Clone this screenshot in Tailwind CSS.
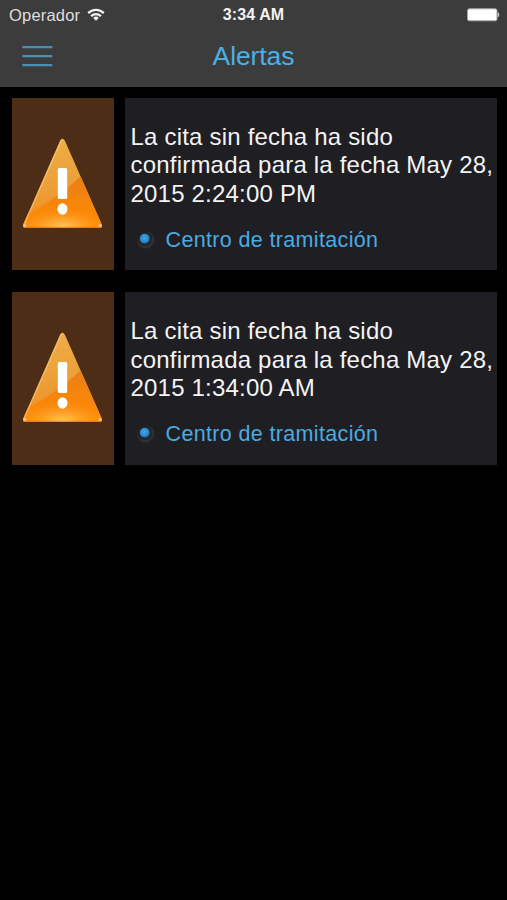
<!DOCTYPE html>
<html lang="es">
<head>
<meta charset="utf-8">
<title>Alertas</title>
<script src="https://cdn.jsdelivr.net/npm/@tailwindcss/browser@4"></script>
</head>
<body class="bg-black">
<svg class="absolute h-0 w-0" aria-hidden="true">
  <defs>
    <linearGradient id="tri" x1="0.3" y1="0" x2="0.5" y2="1"><stop offset="0" stop-color="#efae46"/><stop offset=".5" stop-color="#eda03a"/><stop offset="1" stop-color="#f08a1c"/></linearGradient>
    <linearGradient id="low" x1="0" y1="0" x2="0" y2="1"><stop offset="0" stop-color="#e88018"/><stop offset=".6" stop-color="#f98608"/><stop offset="1" stop-color="#ff9210"/></linearGradient>
    <radialGradient id="glow" cx=".5" cy="1" r=".5"><stop offset="0" stop-color="#ffd070"/><stop offset="1" stop-color="#ff9a20" stop-opacity="0"/></radialGradient>
    <radialGradient id="dot" cx=".45" cy=".4" r=".6"><stop offset="0" stop-color="#46a5e2"/><stop offset=".7" stop-color="#2a88ca"/><stop offset="1" stop-color="#1b5a88"/></radialGradient>
    <radialGradient id="ring" cx=".42" cy=".4" r=".6"><stop offset="0" stop-color="#17171a"/><stop offset=".6" stop-color="#222327"/><stop offset=".85" stop-color="#323337"/><stop offset="1" stop-color="#242429"/></radialGradient>
    <clipPath id="clip"><path d="M37 3Q39.500 -1.500 42 3L78.500 86Q80 90 76 90H3Q-1 90 .5 86Z"/></clipPath>
    <symbol id="warning" viewBox="0 0 79 91">
      <g clip-path="url(#clip)">
        <path fill="url(#tri)" d="M0 0h79v91H0z"/>
        <path fill="url(#low)" d="M0 78C18 70 36 58 58 38L79 50V91H0Z"/>
        <path fill="url(#glow)" d="M0 50h79v41H0z"/>
        <path fill="none" stroke="#f7c57b" stroke-opacity=".65" stroke-width="2" d="M39 0L0 88"/>
        <path fill="none" stroke="#d96b0b" stroke-opacity=".6" stroke-width="1.500" d="M0 89.500H79"/>
      </g>
      <circle cx="1.800" cy="87.500" r="1.500" fill="#f4c28b"/><circle cx="77.200" cy="87.500" r="1.500" fill="#f4c28b"/>
      <rect x="34.800" y="30" width="9.400" height="31" rx="1.500" fill="#fff"/>
      <ellipse cx="39.500" cy="71" rx="5" ry="5.700" fill="#fff"/>
    </symbol>
    <symbol id="bullet" viewBox="0 0 20 20">
      <circle cx="10" cy="10.200" r="8.700" fill="url(#ring)"/>
      <circle cx="8.800" cy="8.800" r="5" fill="url(#dot)"/>
    </symbol>
  </defs>
</svg>
<div class="flex h-[900px] w-[507px] flex-col overflow-hidden bg-black font-['Liberation_Sans',Arial,sans-serif]">
  <header class="h-[87px] shrink-0 bg-[#3c3c3c]">
    <div class="grid h-[30px] grid-cols-[1fr_auto_1fr] items-center pl-[9px] pr-[7px] text-[#f2f2f2]">
      <div class="flex items-center gap-[7px]">
        <span class="text-[16.5px] leading-[30px] tracking-[0.2px] text-[#dedede]">Operador</span>
        <svg class="-mt-[2px] h-[13px] w-[18px]" viewBox="0 0 18 13" fill="none" stroke="#f4f4f4" stroke-width="2.200"><path d="M1.200 5.100A11 11 0 0 1 16.800 5.100"/><path d="M4.100 8.100A7 7 0 0 1 13.900 8.100"/><path d="M9 12.700L6.200 9.900A4 4 0 0 1 11.800 9.900Z" fill="#f4f4f4" stroke="none"/></svg>
      </div>
      <span class="-ml-[2px] text-[16px] font-bold leading-[30px] tracking-[0.1px]">3:34 AM</span>
      <svg class="h-[14px] w-[34px] justify-self-end" viewBox="0 0 34 14"><rect x="1.500" y=".8" width="29.500" height="12" rx="1.800" fill="#fff" stroke="#a5a5a5"/><path d="M32 4.800q2 2 0 4z" fill="#eee" stroke="#ccc" stroke-width=".7"/></svg>
    </div>
    <div class="grid h-[54px] grid-cols-[1fr_auto_1fr] items-center">
      <svg class="ml-[22px] h-[22px] w-[31px]" viewBox="0 0 31 22" fill="none" stroke="#4a8fb4" stroke-width="2.200"><path d="M.3 1.200H30.300M.3 10.200H30.300M.3 19.200H30.300"/></svg>
      <h1 class="-mt-[2px] text-[26.500px] leading-[52px] tracking-[-0.1px] text-[#4bb0e6]">Alertas</h1>
    </div>
  </header>
  <main class="flex flex-col gap-[22px] pl-[11.5px] pr-[10.5px] pt-[11px]">
    <article class="flex h-[172.400px] gap-[11px]">
      <div class="flex w-[102.500px] shrink-0 justify-center bg-[#4d2d15] pt-[40px]"><svg class="h-[91px] w-[79px]"><use href="#warning"/></svg></div>
      <div class="flex-1 bg-[#1f1e23] pl-[5.5px] pt-[24.500px]">
        <p class="whitespace-nowrap text-[24px] leading-[28.700px] tracking-[0.2px] text-[#f3f3f3]">La cita sin fecha ha sido<br>confirmada para la fecha May 28,<br>2015 2:24:00 PM</p>
        <div class="mt-[17.500px] flex items-center gap-[9.500px] pl-[5.5px]">
          <svg class="h-[20px] w-[20px]"><use href="#bullet"/></svg>
          <span class="text-[21.500px] leading-[28px] tracking-[0.35px] text-[#4aabe0]">Centro de tramitación</span>
        </div>
      </div>
    </article>
    <article class="flex h-[172.400px] gap-[11px]">
      <div class="flex w-[102.500px] shrink-0 justify-center bg-[#4d2d15] pt-[40px]"><svg class="h-[91px] w-[79px]"><use href="#warning"/></svg></div>
      <div class="flex-1 bg-[#1f1e23] pl-[5.5px] pt-[24.500px]">
        <p class="whitespace-nowrap text-[24px] leading-[28.700px] tracking-[0.2px] text-[#f3f3f3]">La cita sin fecha ha sido<br>confirmada para la fecha May 28,<br>2015 1:34:00 AM</p>
        <div class="mt-[17px] flex items-center gap-[9.500px] pl-[5.5px]">
          <svg class="h-[20px] w-[20px]"><use href="#bullet"/></svg>
          <span class="text-[21.500px] leading-[28px] tracking-[0.35px] text-[#4aabe0]">Centro de tramitación</span>
        </div>
      </div>
    </article>
  </main>
</div>
</body>
</html>
